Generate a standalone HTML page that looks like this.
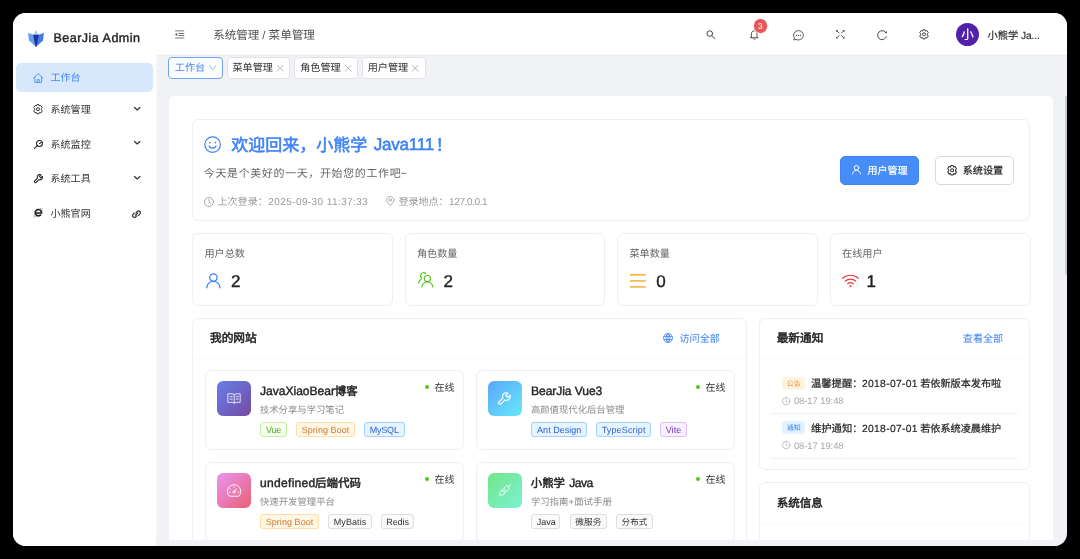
<!DOCTYPE html>
<html lang="zh-CN">
<head>
<meta charset="utf-8">
<title>BearJia Admin</title>
<style>
*{box-sizing:border-box;margin:0;padding:0}
html,body{width:1080px;height:559px;background:#000;overflow:hidden}
body{font-family:"Liberation Sans",sans-serif;color:#262626;position:relative;text-rendering:geometricPrecision}
#win{position:absolute;left:13px;top:13px;width:1054px;height:533px;border-radius:12.5px;overflow:hidden;background:#f0f2f5}
#pg{position:absolute;left:-13px;top:-13px;width:1080px;height:559px;will-change:transform}
.a{position:absolute}
.c{position:absolute;white-space:nowrap;line-height:20px;text-align:justify;text-align-last:justify}
.l{position:absolute;white-space:nowrap;line-height:20px}
svg{position:absolute;overflow:visible}
</style>
</head>
<body>
<div id="win"><div id="pg">
<div class="a" style="left:13px;top:13px;width:143px;height:533px;background:#fff"></div>
<div class="a" style="left:156px;top:55px;width:1px;height:491px;background:#f7f8fa"></div>
<div class="a" style="left:156px;top:13px;width:911px;height:41px;background:#fff"></div>
<div class="a" style="left:156px;top:54px;width:911px;height:1px;background:#f9fafb"></div>
<div class="a" style="left:157px;top:55px;width:910px;height:1px;background:#eceef2"></div>
<div class="a" style="left:169px;top:95.8px;width:884px;height:444.4px;background:#fff;border-radius:6px 6px 0 0"></div>
<svg style="left:22px;top:24px" width="30" height="28" viewBox="0 0 600 560"><polygon points="280,108 236,218 324,218" fill="#a9cdf9"/><polygon points="118,180 236,216 282,458 142,332" fill="#629df6"/><polygon points="440,180 324,216 278,458 420,332" fill="#417ce2"/><polygon points="222,217 338,217 292,440 280,458 268,440" fill="#24319b"/></svg>
<div class="l" style="left:53.4px;top:28px;font-size:12.5px;color:#222;letter-spacing:0.5px;-webkit-text-stroke:.4px;">BearJia Admin</div>
<div class="a" style="left:16px;top:63.4px;width:137.4px;height:28.4px;border-radius:5px;background:#d7e8fd"></div>
<svg style="left:33px;top:72.6px" width="10.4" height="10" viewBox="0 0 104 100"><g fill="none" stroke="#4a8cf7" stroke-width="9" stroke-linejoin="round" stroke-linecap="round"><path d="M6 50 L52 6 L98 50"/><path d="M18 42 V94 H86 V42"/><path d="M42 94 V66 H62 V94"/></g></svg>
<div class="c" style="left:50.5px;top:69px;width:30px;font-size:10px;color:#4285f6;">工作台</div>
<svg style="left:33.2px;top:104px" width="10" height="10.4" viewBox="0 0 100 104"><g fill="none" stroke="#333" stroke-width="10" stroke-linejoin="round"><path d="M40 6 H60 L65 20 L78 14 L93 34 L84 46 V58 L93 70 L78 90 L65 84 L60 98 H40 L35 84 L22 90 L7 70 L16 58 V46 L7 34 L22 14 L35 20 Z"/><circle cx="50" cy="52" r="15"/></g></svg>
<div class="c" style="left:50.5px;top:101px;width:40.2px;font-size:10.05px;color:#333;">系统管理</div>
<svg style="left:133.6px;top:106.8px" width="6.4" height="3.6" viewBox="0 0 64 36"><path d="M5 5 L32 30 L59 5" fill="none" stroke="#333" stroke-width="12" stroke-linecap="round" stroke-linejoin="round"/></svg>
<svg style="left:33.8px;top:139.6px" width="9.2" height="8.8" viewBox="0 0 92 88"><g fill="none" stroke="#2a2a2a" stroke-width="11" stroke-linecap="round" stroke-linejoin="round"><circle cx="55" cy="35" r="30"/><path d="M33 57 L5 83"/><path d="M55 35 L72 26"/></g></svg>
<div class="c" style="left:50.5px;top:136px;width:40.2px;font-size:10.05px;color:#333;">系统监控</div>
<svg style="left:133.6px;top:141.3px" width="6.4" height="3.6" viewBox="0 0 64 36"><path d="M5 5 L32 30 L59 5" fill="none" stroke="#333" stroke-width="12" stroke-linecap="round" stroke-linejoin="round"/></svg>
<svg style="left:33.8px;top:174px" width="9.2" height="9.2" viewBox="0 0 92 92"><path d="M84 22 L68 38 L54 24 L70 8 C58 2 42 6 36 18 C32 26 32 34 35 42 L7 70 C3 74 3 80 7 84 C11 88 17 88 21 84 L49 56 C57 60 67 59 75 53 C85 46 89 33 84 22 Z" fill="none" stroke="#2a2a2a" stroke-width="11" stroke-linejoin="round"/></svg>
<div class="c" style="left:50.5px;top:170px;width:40.2px;font-size:10.05px;color:#333;">系统工具</div>
<svg style="left:133.6px;top:175.8px" width="6.4" height="3.6" viewBox="0 0 64 36"><path d="M5 5 L32 30 L59 5" fill="none" stroke="#333" stroke-width="12" stroke-linecap="round" stroke-linejoin="round"/></svg>
<svg style="left:33.4px;top:208.4px" width="9.6" height="9.2" viewBox="0 0 96 92"><g fill="none" stroke="#1f1f1f" stroke-linecap="butt"><path d="M80 66 A32 32 0 1 1 86 50 H26" stroke-width="16"/><path d="M62 14 C76 0 94 2 92 18 C91 23 89 27 87 30" stroke-width="6" stroke="#777"/><path d="M22 58 C8 74 4 90 14 91 C22 92 30 88 38 82" stroke-width="6" stroke="#777"/></g></svg>
<div class="c" style="left:50.5px;top:205px;width:40.2px;font-size:10.05px;color:#333;">小熊官网</div>
<svg style="left:132px;top:209.8px" width="9" height="8.4" viewBox="0 0 90 84"><g fill="none" stroke="#2a2a2a" stroke-width="11" stroke-linecap="round"><path d="M40 28 L52 16 C60 8 72 8 79 15 C86 22 86 34 78 42 L66 54"/><path d="M50 56 L38 68 C30 76 18 76 11 69 C4 62 4 50 12 42 L24 30"/><path d="M34 52 L58 30"/></g></svg>
<svg style="left:174.7px;top:30px" width="9.2" height="8.8" viewBox="0 0 92 88"><g fill="none"><path d="M1 8 H92" stroke="#9a9a9a" stroke-width="13"/><path d="M1 80 H92" stroke="#9a9a9a" stroke-width="13"/><path d="M36 35 H92" stroke="#5a5a5a" stroke-width="9"/><path d="M36 55 H92" stroke="#5a5a5a" stroke-width="9"/></g><path d="M0 45 L22 30 V60 Z" fill="#4a4a4a"/></svg>
<div class="c" style="left:213.22px;top:26px;width:46.04px;font-size:11.51px;color:#505050;">系统管理</div>
<div class="l" style="left:262.26px;top:26px;font-size:11.4px;color:#505050;letter-spacing:0px;">/</div>
<div class="c" style="left:268.62px;top:26px;width:46.24px;font-size:11.56px;color:#505050;">菜单管理</div>
<svg style="left:705.6px;top:30px" width="9.6" height="9.2" viewBox="0 0 96 92"><g fill="none" stroke="#444" stroke-width="10" stroke-linecap="round"><circle cx="38" cy="36" r="28"/><path d="M59 57 L90 87"/></g></svg>
<svg style="left:750.4px;top:30.4px" width="8.4" height="9.8" viewBox="0 0 84 98"><g fill="none" stroke="#444" stroke-width="9" stroke-linejoin="round" stroke-linecap="round"><path d="M14 76 V40 C14 22 26 8 42 8 C58 8 70 22 70 40 V76"/><path d="M4 77 H80"/><path d="M32 88 C36 96 48 96 52 88"/></g></svg>
<div class="a" style="left:752.6px;top:18.2px;width:15.6px;height:15.6px;border-radius:50%;background:#ea5553;border:.6px solid #fff"></div>
<div class="l" style="left:753.2px;top:16px;width:14.4px;text-align:center;font-size:8.4px;color:#fff">3</div>
<svg style="left:792.8px;top:29.6px" width="11" height="10.6" viewBox="0 0 110 106"><g fill="none" stroke="#444" stroke-width="9" stroke-linejoin="round"><path d="M55 6 C82 6 104 27 104 53 C104 79 82 100 55 100 C46 100 38 98 31 94 L8 100 L14 78 C9 71 6 62 6 53 C6 27 28 6 55 6 Z"/></g><circle cx="34" cy="54" r="6" fill="#444"/><circle cx="55" cy="54" r="6" fill="#444"/><circle cx="76" cy="54" r="6" fill="#444"/></svg>
<svg style="left:835.8px;top:30.2px" width="8.6" height="8.6" viewBox="0 0 86 86"><g fill="none" stroke="#444" stroke-width="9" stroke-linecap="round"><path d="M12 12 L31 31"/><path d="M74 12 L55 31"/><path d="M12 74 L31 55"/><path d="M74 74 L55 55"/></g><g fill="#444"><path d="M1 1 H22 L1 22 Z"/><path d="M85 1 H64 L85 22 Z"/><path d="M1 85 H22 L1 64 Z"/><path d="M85 85 H64 L85 64 Z"/></g></svg>
<svg style="left:877px;top:29.6px" width="10.4" height="10.4" viewBox="0 0 104 104"><g fill="none" stroke="#444" stroke-width="10" stroke-linecap="round"><path d="M92 66 C86 84 70 97 51 97 C26 97 7 77 7 52 C7 27 26 7 51 7 C66 7 79 14 88 26"/></g><path d="M78 30 L98 34 L96 10 Z" fill="#444"/></svg>
<svg style="left:918.8px;top:29.4px" width="10" height="10.6" viewBox="0 0 100 104"><g fill="none" stroke="#444" stroke-width="10" stroke-linejoin="round"><path d="M40 6 H60 L65 20 L78 14 L93 34 L84 46 V58 L93 70 L78 90 L65 84 L60 98 H40 L35 84 L22 90 L7 70 L16 58 V46 L7 34 L22 14 L35 20 Z"/><circle cx="50" cy="52" r="15"/></g></svg>
<div class="a" style="left:956px;top:23px;width:23.3px;height:23.3px;border-radius:50%;background:#5122a9"></div>
<div class="c" style="left:961.37px;top:25px;width:12.6px;font-size:12.6px;color:#fff;-webkit-text-stroke:.2px;">小</div>
<div class="c" style="left:987.49px;top:27px;width:30.84px;font-size:10.28px;color:#333;-webkit-text-stroke:.2px;">小熊学</div>
<div class="l" style="left:1020.9px;top:27px;font-size:10.3px;color:#333;letter-spacing:-0.14px;-webkit-text-stroke:.18px;">Ja...</div>
<div class="a" style="left:168.2px;top:57px;width:54.9px;height:21.6px;background:#fdfeff;border:1px solid #6ea3f9;border-radius:4px"></div>
<div class="c" style="left:174.79px;top:59px;width:30.42px;font-size:10.14px;color:#4285f6;">工作台</div>
<svg style="left:209px;top:65px" width="7.4" height="5.4" viewBox="0 0 74 54"><path d="M4 5 L37 48 L70 5" fill="none" stroke="#7aaaf8" stroke-width="8" stroke-linecap="round" stroke-linejoin="round"/></svg>
<div class="a" style="left:226.5px;top:57px;width:63.8px;height:21.6px;background:#fff;border:1px solid #dfe2e7;border-radius:4px"></div>
<div class="c" style="left:232.39px;top:59px;width:40.52px;font-size:10.13px;color:#333;">菜单管理</div>
<svg style="left:276.7px;top:64.5px" width="6.6" height="6.6" viewBox="0 0 66 66"><path d="M4 4 L62 62 M62 4 L4 62" fill="none" stroke="#a3a3a3" stroke-width="8" stroke-linecap="round"/></svg>
<div class="a" style="left:294.3px;top:57px;width:63.6px;height:21.6px;background:#fff;border:1px solid #dfe2e7;border-radius:4px"></div>
<div class="c" style="left:300.19px;top:59px;width:40.52px;font-size:10.13px;color:#333;">角色管理</div>
<svg style="left:344.5px;top:64.5px" width="6.6" height="6.6" viewBox="0 0 66 66"><path d="M4 4 L62 62 M62 4 L4 62" fill="none" stroke="#a3a3a3" stroke-width="8" stroke-linecap="round"/></svg>
<div class="a" style="left:361.8px;top:57px;width:63.8px;height:21.6px;background:#fff;border:1px solid #dfe2e7;border-radius:4px"></div>
<div class="c" style="left:367.69px;top:59px;width:40.52px;font-size:10.13px;color:#333;">用户管理</div>
<svg style="left:412px;top:64.5px" width="6.6" height="6.6" viewBox="0 0 66 66"><path d="M4 4 L62 62 M62 4 L4 62" fill="none" stroke="#a3a3a3" stroke-width="8" stroke-linecap="round"/></svg>
<div class="a" style="left:192.3px;top:119px;width:837.8px;height:102.4px;background:#fff;border:1px solid #efefef;border-radius:6px"></div>
<svg style="left:204.4px;top:136.4px" width="17.2" height="17.2" viewBox="0 0 172 172"><g fill="none" stroke="#3e82f7" stroke-width="12" stroke-linecap="round"><circle cx="86" cy="86" r="78"/><path d="M52 100 C60 128 112 128 120 100"/></g><circle cx="58" cy="66" r="9" fill="#3e82f7"/><circle cx="114" cy="66" r="9" fill="#3e82f7"/></svg>
<div class="c" style="left:231.15px;top:136px;width:136px;font-size:17px;color:#3e82f7;-webkit-text-stroke:.5px;-webkit-text-stroke:.55px;">欢迎回来，小熊学</div>
<div class="l" style="left:373.7px;top:135px;font-size:17px;color:#3e82f7;letter-spacing:-0.19px;-webkit-text-stroke:.4px;-webkit-text-stroke:.55px;">Java111</div>
<div class="c" style="left:436.15px;top:136px;width:17px;font-size:17px;color:#3e82f7;-webkit-text-stroke:.5px;left:435.4px;-webkit-text-stroke:.55px;">！</div>
<div class="c" style="left:203.85px;top:164px;width:196.74px;font-size:10.93px;color:#666;">今天是个美好的一天，开始您的工作吧</div>
<div class="l" style="left:400.58px;top:164px;font-size:11px;color:#666;letter-spacing:0px;">~</div>
<svg style="left:204.4px;top:196.6px" width="10" height="10" viewBox="0 0 94 94"><g fill="none" stroke="#999" stroke-width="8" stroke-linecap="round" stroke-linejoin="round"><circle cx="47" cy="47" r="42"/><path d="M47 22 V49 L64 60"/></g></svg>
<div class="c" style="left:217.5px;top:193px;width:50.25px;font-size:10.05px;color:#999;">上次登录：</div>
<div class="l" style="left:268.3px;top:193px;font-size:10px;color:#999;letter-spacing:0.41px;">2025-09-30 11:37:33</div>
<svg style="left:386.2px;top:196.4px" width="8.6" height="10" viewBox="0 0 86 100"><g fill="none" stroke="#999" stroke-width="8" stroke-linejoin="round"><path d="M43 95 C22 72 6 56 6 40 C6 20 22 5 43 5 C64 5 80 20 80 40 C80 56 64 72 43 95 Z"/><circle cx="43" cy="40" r="13"/></g></svg>
<div class="c" style="left:398.4px;top:193px;width:50.25px;font-size:10.05px;color:#999;">登录地点：</div>
<div class="l" style="left:449.1px;top:193px;font-size:10px;color:#999;letter-spacing:-0.41px;">127.0.0.1</div>
<div class="a" style="left:840px;top:155.8px;width:79.4px;height:28.8px;border-radius:5px;background:#468df6;border:1px solid #3d86f5"></div>
<svg style="left:852.4px;top:165.4px" width="9" height="9.4" viewBox="0 0 94 100"><g fill="none" stroke="#fff" stroke-width="10" stroke-linecap="round"><circle cx="47" cy="30" r="24"/><path d="M5 96 C8 70 26 56 47 56 C68 56 86 70 89 96"/></g></svg>
<div class="c" style="left:867.6px;top:162px;width:40px;font-size:10px;color:#fff;-webkit-text-stroke:.2px;">用户管理</div>
<div class="a" style="left:935.3px;top:155.8px;width:79.2px;height:28.8px;border-radius:5px;background:#fff;border:1px solid #d9d9d9"></div>
<svg style="left:946.8px;top:164.9px" width="10.2" height="10.6" viewBox="0 0 100 104"><g fill="none" stroke="#333" stroke-width="10" stroke-linejoin="round"><path d="M40 6 H60 L65 20 L78 14 L93 34 L84 46 V58 L93 70 L78 90 L65 84 L60 98 H40 L35 84 L22 90 L7 70 L16 58 V46 L7 34 L22 14 L35 20 Z"/><circle cx="50" cy="52" r="15"/></g></svg>
<div class="c" style="left:962.69px;top:162px;width:40.52px;font-size:10.13px;color:#222;-webkit-text-stroke:.2px;">系统设置</div>
<div class="a" style="left:192.3px;top:233.2px;width:200.6px;height:72.4px;background:#fff;border:1px solid #efefef;border-radius:6px"></div>
<div class="c" style="left:204.39px;top:245px;width:40.52px;font-size:10.13px;color:#666;">用户总数</div>
<div class="l" style="left:230.92px;top:272px;font-size:17px;color:#222;letter-spacing:0px;-webkit-text-stroke:.4px;">2</div>
<svg style="left:205.8px;top:272.6px" width="14.8" height="15.4" viewBox="0 0 148 154"><g fill="none" stroke="#3e82f7" stroke-width="13" stroke-linecap="round"><circle cx="74" cy="46" r="37"/><path d="M8 148 C12 108 42 84 74 84 C106 84 136 108 140 148"/></g></svg>
<div class="a" style="left:404.8px;top:233.2px;width:200.6px;height:72.4px;background:#fff;border:1px solid #efefef;border-radius:6px"></div>
<div class="c" style="left:416.89px;top:245px;width:40.52px;font-size:10.13px;color:#666;">角色数量</div>
<div class="l" style="left:443.47px;top:272px;font-size:17px;color:#222;letter-spacing:0px;-webkit-text-stroke:.4px;">2</div>
<svg style="left:417.8px;top:272.2px" width="15.4" height="15.6" viewBox="0 0 154 156"><g fill="none" stroke="#58c322" stroke-width="12" stroke-linecap="round"><circle cx="94" cy="66" r="31"/><path d="M40 150 C44 118 66 100 94 100 C122 100 144 118 148 150"/><path d="M78 14 C62 2 38 4 28 26 C22 40 28 56 38 62"/><path d="M6 110 C8 92 18 78 34 70"/></g></svg>
<div class="a" style="left:617.4px;top:233.2px;width:200.6px;height:72.4px;background:#fff;border:1px solid #efefef;border-radius:6px"></div>
<div class="c" style="left:629.49px;top:245px;width:40.52px;font-size:10.13px;color:#666;">菜单数量</div>
<div class="l" style="left:656.27px;top:272px;font-size:17px;color:#222;letter-spacing:0px;-webkit-text-stroke:.4px;">0</div>
<svg style="left:630px;top:273.5px" width="15.8" height="13.7" viewBox="0 0 158 137"><g fill="none" stroke="#f5b02e" stroke-width="15"><path d="M0 8 H158"/><path d="M0 69 H158"/><path d="M0 129 H158"/></g></svg>
<div class="a" style="left:830px;top:233.2px;width:200.6px;height:72.4px;background:#fff;border:1px solid #efefef;border-radius:6px"></div>
<div class="c" style="left:842.09px;top:245px;width:40.52px;font-size:10.13px;color:#666;">在线用户</div>
<div class="l" style="left:866.62px;top:272px;font-size:17px;color:#222;letter-spacing:0px;-webkit-text-stroke:.4px;">1</div>
<svg style="left:841.9px;top:273.8px" width="17" height="13.2" viewBox="0 0 170 132"><g fill="none" stroke="#ec3b41" stroke-width="12" stroke-linecap="round"><path d="M6 44 C50 2 120 2 164 44"/><path d="M32 72 C62 44 108 44 138 72"/><path d="M58 98 C74 84 96 84 112 98"/></g><circle cx="85" cy="120" r="10" fill="#ec3b41"/></svg>
<div class="a" style="left:192.4px;top:318px;width:554.2px;height:240px;background:#fff;border:1px solid #efefef;border-radius:6px"></div>
<div class="a" style="left:193.4px;top:358.4px;width:552.2px;height:1px;background:#fafafa"></div>
<div class="c" style="left:209.91px;top:329px;width:46.88px;font-size:11.72px;color:#222;-webkit-text-stroke:.5px;">我的网站</div>
<svg style="left:663.3px;top:333.3px" width="10" height="10" viewBox="0 0 100 100"><g fill="none" stroke="#3e82f7" stroke-width="8"><circle cx="50" cy="50" r="45"/><ellipse cx="50" cy="50" rx="19" ry="45"/><path d="M50 5 V95 M7 35 H93 M7 65 H93"/></g></svg>
<div class="c" style="left:679.5px;top:330px;width:40.32px;font-size:10.08px;color:#3e82f7;">访问全部</div>
<div class="a" style="left:204.6px;top:369.6px;width:259px;height:80px;background:#fff;border:1px solid #efefef;border-radius:6px"></div>
<div class="a" style="left:216.7px;top:381.4px;width:34.4px;height:34.6px;border-radius:6px;background:linear-gradient(135deg,#667eea,#764ba2)"></div>
<svg style="left:226.7px;top:393px" width="14.4" height="11.2" viewBox="0 0 130 110"><g fill="none" stroke="#fff" stroke-width="8" stroke-linejoin="round" stroke-linecap="round"><path d="M6 8 H50 C58 8 65 14 65 22 C65 14 72 8 80 8 H124 V92 H80 C72 92 65 98 65 104 C65 98 58 92 50 92 H6 Z"/><path d="M65 22 V100"/><path d="M24 36 H46 M24 60 H46 M84 36 H106 M84 60 H106"/></g></svg>
<div class="l" style="left:260.1px;top:381px;font-size:12.1px;color:#262626;letter-spacing:-0.04px;-webkit-text-stroke:.4px;">JavaXiaoBear</div>
<div class="c" style="left:334.83px;top:382px;width:22.74px;font-size:11.37px;color:#262626;-webkit-text-stroke:.5px;">博客</div>
<div class="c" style="left:259.93px;top:400px;width:84.15px;font-size:9.35px;color:#8a8a8a;">技术分享与学习笔记</div>
<div class="a" style="left:424.6px;top:385.1px;width:4.4px;height:4.4px;border-radius:50%;background:#52c41a"></div>
<div class="c" style="left:434.5px;top:379px;width:20px;font-size:10px;color:#333;">在线</div>
<div class="a" style="left:260.4px;top:421.6px;width:26.2px;height:15.5px;background:#f6ffed;border:1px solid #c4eda6;border-radius:3px"></div>
<div class="l" style="left:266.1px;top:420px;font-size:9px;color:#4aa620;letter-spacing:-0.24px;">Vue</div>
<div class="a" style="left:295.6px;top:421.6px;width:59.4px;height:15.5px;background:#fff7e6;border:1px solid #ffdea8;border-radius:3px"></div>
<div class="l" style="left:301.7px;top:420px;font-size:9px;color:#d4772a;letter-spacing:0.06px;">Spring Boot</div>
<div class="a" style="left:364.2px;top:421.6px;width:40.4px;height:15.5px;background:#e6f4ff;border:1px solid #a6d2fd;border-radius:3px"></div>
<div class="l" style="left:369.7px;top:420px;font-size:9px;color:#2d62d6;letter-spacing:-0.2px;">MySQL</div>
<div class="a" style="left:475.6px;top:369.6px;width:259px;height:80px;background:#fff;border:1px solid #efefef;border-radius:6px"></div>
<div class="a" style="left:487.7px;top:381.4px;width:34.4px;height:34.6px;border-radius:6px;background:linear-gradient(135deg,#5aa6f9,#68e9fb)"></div>
<svg style="left:498.4px;top:392.1px" width="13" height="13" viewBox="0 0 92 92"><path d="M84 22 L68 38 L54 24 L70 8 C58 2 42 6 36 18 C32 26 32 34 35 42 L7 70 C3 74 3 80 7 84 C11 88 17 88 21 84 L49 56 C57 60 67 59 75 53 C85 46 89 33 84 22 Z" fill="none" stroke="#fff" stroke-width="8" stroke-linejoin="round"/></svg>
<div class="l" style="left:531.1px;top:381px;font-size:12.1px;color:#262626;letter-spacing:-0.09px;-webkit-text-stroke:.4px;">BearJia Vue3</div>
<div class="c" style="left:530.93px;top:400px;width:93.5px;font-size:9.35px;color:#8a8a8a;">高颜值现代化后台管理</div>
<div class="a" style="left:695.6px;top:385.1px;width:4.4px;height:4.4px;border-radius:50%;background:#52c41a"></div>
<div class="c" style="left:705.5px;top:379px;width:20px;font-size:10px;color:#333;">在线</div>
<div class="a" style="left:531.4px;top:421.6px;width:55.2px;height:15.5px;background:#e6f4ff;border:1px solid #a6d2fd;border-radius:3px"></div>
<div class="l" style="left:537.1px;top:420px;font-size:9px;color:#2d62d6;letter-spacing:0.02px;">Ant Design</div>
<div class="a" style="left:596px;top:421.6px;width:55px;height:15.5px;background:#e6f4ff;border:1px solid #a6d2fd;border-radius:3px"></div>
<div class="l" style="left:601.7px;top:420px;font-size:9px;color:#2d62d6;letter-spacing:0.14px;">TypeScript</div>
<div class="a" style="left:660px;top:421.6px;width:27px;height:15.5px;background:#f9f0ff;border:1px solid #dcbff8;border-radius:3px"></div>
<div class="l" style="left:665.7px;top:420px;font-size:9px;color:#6b34b8;letter-spacing:0.08px;">Vite</div>
<div class="a" style="left:204.6px;top:461.6px;width:259px;height:80px;background:#fff;border:1px solid #efefef;border-radius:6px"></div>
<div class="a" style="left:216.7px;top:473.4px;width:34.4px;height:34.6px;border-radius:6px;background:linear-gradient(135deg,#e995f2,#e95f74)"></div>
<svg style="left:226.8px;top:484px" width="14.2" height="12.8" viewBox="0 0 134 120"><g fill="none" stroke="#fff" stroke-width="9" stroke-linejoin="round" stroke-linecap="round"><path d="M20 112 C10 100 5 86 5 70 C5 34 33 6 67 6 C101 6 129 34 129 70 C129 86 124 100 114 112 Z"/><circle cx="67" cy="74" r="12"/><path d="M75 64 L90 44"/><path d="M67 24 V32 M30 44 L36 50 M22 76 H30 M104 76 H112"/></g></svg>
<div class="l" style="left:260.1px;top:473px;font-size:12.1px;color:#262626;letter-spacing:0.26px;-webkit-text-stroke:.4px;">undefined</div>
<div class="c" style="left:315.03px;top:474px;width:45.96px;font-size:11.49px;color:#262626;-webkit-text-stroke:.5px;">后端代码</div>
<div class="c" style="left:259.93px;top:492px;width:74.96px;font-size:9.37px;color:#8a8a8a;">快速开发管理平台</div>
<div class="a" style="left:424.6px;top:477.1px;width:4.4px;height:4.4px;border-radius:50%;background:#52c41a"></div>
<div class="c" style="left:434.5px;top:471px;width:20px;font-size:10px;color:#333;">在线</div>
<div class="a" style="left:260.4px;top:513.6px;width:58.6px;height:15.5px;background:#fff7e6;border:1px solid #ffdea8;border-radius:3px"></div>
<div class="l" style="left:265.7px;top:512px;font-size:9px;color:#d4772a;letter-spacing:0.06px;">Spring Boot</div>
<div class="a" style="left:328.2px;top:513.6px;width:43.4px;height:15.5px;background:#fafafa;border:1px solid #dedede;border-radius:3px"></div>
<div class="l" style="left:333.7px;top:512px;font-size:9px;color:#333;letter-spacing:0.1px;">MyBatis</div>
<div class="a" style="left:380.6px;top:513.6px;width:33.8px;height:15.5px;background:#fafafa;border:1px solid #dedede;border-radius:3px"></div>
<div class="l" style="left:386.3px;top:512px;font-size:9px;color:#333;letter-spacing:-0.1px;">Redis</div>
<div class="a" style="left:475.6px;top:461.6px;width:259px;height:80px;background:#fff;border:1px solid #efefef;border-radius:6px"></div>
<div class="a" style="left:487.7px;top:473.4px;width:34.4px;height:34.6px;border-radius:6px;background:linear-gradient(135deg,#72e68a,#7cf1d2)"></div>
<svg style="left:498.4px;top:484.1px" width="13" height="13" viewBox="0 0 130 130"><g fill="none" stroke="#fff" stroke-width="10" stroke-linejoin="round" stroke-linecap="round"><path d="M60 40 L74 26 C82 18 96 18 104 26 C112 34 112 48 104 56 L90 70 Z"/><path d="M40 60 L26 74 C18 82 18 96 26 104 C34 112 48 112 56 104 L70 90 Z"/><path d="M104 26 L122 8 M26 104 L8 122 M58 58 L46 70 M72 72 L60 84"/></g></svg>
<div class="c" style="left:530.83px;top:474px;width:34.14px;font-size:11.38px;color:#262626;-webkit-text-stroke:.5px;">小熊学</div>
<div class="l" style="left:569.3px;top:473px;font-size:12.1px;color:#262626;letter-spacing:-0.52px;-webkit-text-stroke:.4px;">Java</div>
<div class="c" style="left:530.93px;top:492px;width:37.52px;font-size:9.38px;color:#8a8a8a;">学习指南</div>
<div class="l" style="left:568.56px;top:492px;font-size:9.4px;color:#8a8a8a;letter-spacing:0px;">+</div>
<div class="c" style="left:574.13px;top:492px;width:37.76px;font-size:9.44px;color:#8a8a8a;">面试手册</div>
<div class="a" style="left:695.6px;top:477.1px;width:4.4px;height:4.4px;border-radius:50%;background:#52c41a"></div>
<div class="c" style="left:705.5px;top:471px;width:20px;font-size:10px;color:#333;">在线</div>
<div class="a" style="left:531.4px;top:513.6px;width:29px;height:15.5px;background:#fafafa;border:1px solid #dedede;border-radius:3px"></div>
<div class="l" style="left:536.7px;top:512px;font-size:9px;color:#333;letter-spacing:-0.01px;">Java</div>
<div class="a" style="left:569.6px;top:513.6px;width:37px;height:15.5px;background:#fafafa;border:1px solid #dedede;border-radius:3px"></div>
<div class="c" style="left:575.16px;top:512px;width:26.28px;font-size:8.76px;color:#333;">微服务</div>
<div class="a" style="left:616px;top:513.6px;width:36.6px;height:15.5px;background:#fafafa;border:1px solid #dedede;border-radius:3px"></div>
<div class="c" style="left:621.57px;top:512px;width:25.86px;font-size:8.62px;color:#333;">分布式</div>
<div class="a" style="left:758.8px;top:318px;width:271.4px;height:152.3px;background:#fff;border:1px solid #efefef;border-radius:6px"></div>
<div class="a" style="left:759.8px;top:358.4px;width:269.4px;height:1px;background:#fafafa"></div>
<div class="c" style="left:776.72px;top:329px;width:46.56px;font-size:11.64px;color:#222;-webkit-text-stroke:.5px;">最新通知</div>
<div class="c" style="left:962.79px;top:330px;width:40.4px;font-size:10.1px;color:#3e82f7;">查看全部</div>
<div class="a" style="left:782.3px;top:376.5px;width:22.9px;height:13.4px;border-radius:3px;background:#fff4e3"></div>
<div class="c" style="left:786.85px;top:375px;width:14px;font-size:7px;color:#f5922a;">公告</div>
<div class="c" style="left:810.98px;top:375px;width:51.65px;font-size:10.33px;color:#222;-webkit-text-stroke:.2px;">温馨提醒：</div>
<div class="l" style="left:862px;top:375px;font-size:10.3px;color:#222;letter-spacing:0.31px;-webkit-text-stroke:.18px;">2018-07-01</div>
<div class="c" style="left:920.19px;top:375px;width:81.04px;font-size:10.13px;color:#222;-webkit-text-stroke:.2px;">若依新版本发布啦</div>
<svg style="left:782.3px;top:396.7px" width="8.2" height="8.2" viewBox="0 0 94 94"><g fill="none" stroke="#a8a8a8" stroke-width="8" stroke-linecap="round" stroke-linejoin="round"><circle cx="47" cy="47" r="42"/><path d="M47 22 V49 L64 60"/></g></svg>
<div class="l" style="left:793.9px;top:391px;font-size:9.4px;color:#a6a6a6;letter-spacing:-0.04px;">08-17 19:48</div>
<div class="a" style="left:771px;top:413.1px;width:247px;height:1px;background:#f0f0f0"></div>
<div class="a" style="left:782.3px;top:420.9px;width:22.9px;height:13.4px;border-radius:3px;background:#e4f1ff"></div>
<div class="c" style="left:786.85px;top:419px;width:14px;font-size:7px;color:#2b7ff5;">通知</div>
<div class="c" style="left:810.98px;top:420px;width:51.65px;font-size:10.33px;color:#222;-webkit-text-stroke:.2px;">维护通知：</div>
<div class="l" style="left:862px;top:420px;font-size:10.3px;color:#222;letter-spacing:0.31px;-webkit-text-stroke:.18px;">2018-07-01</div>
<div class="c" style="left:920.19px;top:420px;width:81.04px;font-size:10.13px;color:#222;-webkit-text-stroke:.2px;">若依系统凌晨维护</div>
<svg style="left:782.3px;top:441.1px" width="8.2" height="8.2" viewBox="0 0 94 94"><g fill="none" stroke="#a8a8a8" stroke-width="8" stroke-linecap="round" stroke-linejoin="round"><circle cx="47" cy="47" r="42"/><path d="M47 22 V49 L64 60"/></g></svg>
<div class="l" style="left:793.9px;top:436px;font-size:9.4px;color:#a6a6a6;letter-spacing:-0.04px;">08-17 19:48</div>
<div class="a" style="left:771px;top:457.5px;width:247px;height:1px;background:#f0f0f0"></div>
<div class="a" style="left:758.8px;top:482.4px;width:271.4px;height:100px;background:#fff;border:1px solid #efefef;border-radius:6px"></div>
<div class="a" style="left:759.8px;top:523px;width:269.4px;height:1px;background:#fafafa"></div>
<div class="c" style="left:776.72px;top:494px;width:46.16px;font-size:11.54px;color:#222;-webkit-text-stroke:.5px;">系统信息</div>
<div class="a" style="left:156px;top:540.2px;width:911px;height:6px;background:#f0f2f5"></div>
<div class="a" style="left:1065.2px;top:96px;width:2px;height:179px;background:#c9ccd1;border-radius:1px"></div>
</div></div>
</body>
</html>
